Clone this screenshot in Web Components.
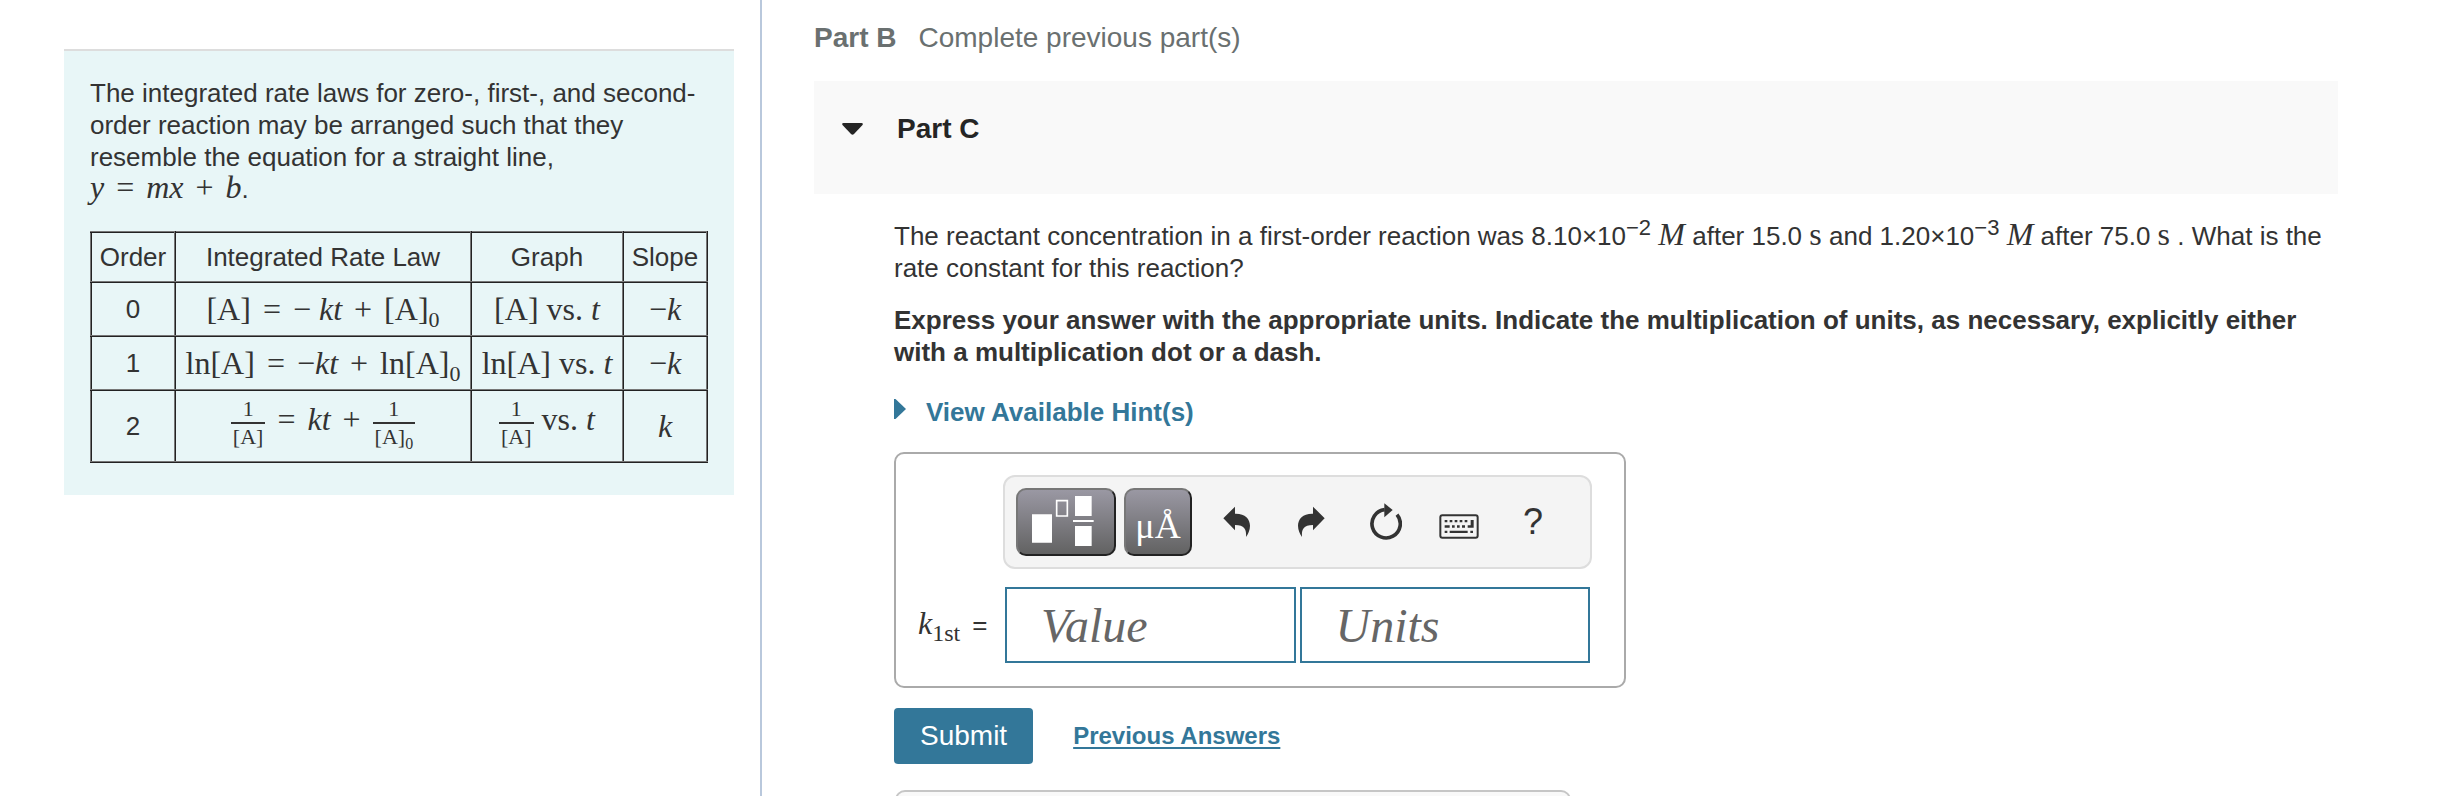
<!DOCTYPE html>
<html lang="en">
<head>
<meta charset="utf-8">
<meta name="viewport" content="width=device-width, initial-scale=1">
<title>Integrated rate laws</title>
<style>
    body {
        margin: 0;
        background: #fff;
        color: #333;
        font: 26px/32px "Liberation Sans", Arial, sans-serif;
    }
</style>
</head>
<body>

<study-layout>
    <intro-panel slot="intro">
        The integrated rate laws for zero-, first-, and second-order reaction may be arranged such that they resemble the equation for a straight line,<br>
        <math-text><i>y</i> <math-op>=</math-op> <i>mx</i> <math-op>+</math-op> <i>b</i></math-text>.
        <rate-table slot="table"></rate-table>
    </intro-panel>

    <locked-part label="Part B">Complete previous part(s)</locked-part>
    <part-header>Part C</part-header>
    <part-body>
        <span slot="question">The reactant concentration in a first-order reaction was 8.10×10<power-of>−2</power-of> <math-text><i>M</i></math-text> after 15.0 <math-text>s</math-text> and 1.20×10<power-of>−3</power-of> <math-text><i>M</i></math-text> after 75.0 <math-text>s</math-text> . What is the <span>rate constant for this reaction?</span></span>
        <span slot="instructions">Express your answer with the appropriate units. Indicate the multiplication of units, as necessary, explicitly either with a multiplication dot or a dash.</span>
        <hint-toggle>View Available Hint(s)</hint-toggle>
        <quantity-answer></quantity-answer>
        <answer-actions></answer-actions>
        <feedback-box></feedback-box>
    </part-body>
</study-layout>

<script>
class StudyLayout extends HTMLElement {

    constructor() {
        super();
        this.attachShadow({mode: "open"}).innerHTML = `
        <style>
            :host {
                display: grid;
                grid-template-columns: 44fr 97fr;
                height: 100vh;
                overflow: hidden;
            }

            aside {
                box-sizing: border-box;
                padding: 49px 26px 0 64px;
                border-right: 2px solid #b9c8dc;
            }

            main {
                min-width: 0;
                padding: 22px 100px 0 52px;
                overflow: hidden;
            }
        </style>
        <aside><slot name="intro"></slot></aside>
        <main><slot></slot></main>`;
    }
}

class IntroPanel extends HTMLElement {

    constructor() {
        super();
        this.attachShadow({mode: "open"}).innerHTML = `
        <style>
            :host {
                display: block;
                padding: 26px 26px 32px;
                border-top: 2px solid #ddd;
                background: #e8f6f7;
            }

            p {
                margin: 0 0 26px;
            }
        </style>
        <p><slot></slot></p>
        <slot name="table"></slot>`;
    }
}

/* serif run used for variables and formulas */
class MathText extends HTMLElement {

    constructor() {
        super();
        this.attachShadow({mode: "open"}).innerHTML = `<style>
            :host {
                font-family: "Liberation Serif", "Times New Roman", serif;
                font-size: 32px;
                line-height: 1px;
                white-space: nowrap;
            }
        </style><slot></slot>`;
    }
}

/* relation or binary operator, with a little air on both sides */
class MathOp extends HTMLElement {

    constructor() {
        super();
        this.attachShadow({mode: "open"}).innerHTML = `<style>
            :host {
                margin: 0 4px;
            }
        </style><slot></slot>`;
    }
}

class PowerOf extends HTMLElement {

    constructor() {
        super();
        this.attachShadow({mode: "open"}).innerHTML = `<style>
            sup {
                font-size: 22px;
                line-height: 1px;
            }
        </style><sup><slot></slot></sup>`;
    }
}

class RateTable extends HTMLElement {

    constructor() {
        super();
        this.attachShadow({mode: "open"}).innerHTML = `
        <style>
            :host {
                display: block;
            }

            table {
                width: 618px;
                max-width: 100%;
                border-collapse: collapse;
                table-layout: fixed;
            }

            .narrow { width: 84px; }
            .law { width: 296px; }

            th, td {
                height: 52px;
                padding: 0;
                border: 2px ridge #777;
                font-weight: normal;
                text-align: center;
            }

            th {
                height: 48px;
            }

            .tall td {
                height: 70px;
            }

            .tall .lifted {
                height: 64px;
                padding-bottom: 6px;
            }

            .math {
                font-family: "Liberation Serif", "Times New Roman", serif;
                font-size: 32px;
                white-space: nowrap;
            }

            sub {
                font-size: 22px;
                line-height: 1px;
            }

            .fraction {
                display: inline-flex;
                flex-direction: column;
                vertical-align: middle;
                font-size: 22px;
                line-height: 26px;
            }

            .fraction span:first-child {
                border-bottom: 2px solid #333;
            }

            .fraction span:last-child {
                padding: 0 2px;
            }

            .fraction sub {
                font-size: 16px;
            }
        </style>
        <table>
            <colgroup><col class="narrow"><col class="law"><col><col class="narrow"></colgroup>
            <thead>
                <tr><th>Order</th><th>Integrated Rate Law</th><th>Graph</th><th>Slope</th></tr>
            </thead>
            <tbody>
                <tr>
                    <td>0</td>
                    <td class="math">[A] <math-op>=</math-op> − <i>kt</i> <math-op>+</math-op> [A]<sub>0</sub></td>
                    <td class="math">[A] vs. <i>t</i></td>
                    <td class="math">−<i>k</i></td>
                </tr>
                <tr>
                    <td>1</td>
                    <td class="math">ln[A] <math-op>=</math-op> −<i>kt</i> <math-op>+</math-op> ln[A]<sub>0</sub></td>
                    <td class="math">ln[A] vs. <i>t</i></td>
                    <td class="math">−<i>k</i></td>
                </tr>
                <tr class="tall">
                    <td>2</td>
                    <td class="math lifted"><span class="fraction"><span>1</span><span>[A]</span></span> <math-op>=</math-op> <i>kt</i> <math-op>+</math-op> <span class="fraction"><span>1</span><span>[A]<sub>0</sub></span></span></td>
                    <td class="math lifted"><span class="fraction"><span>1</span><span>[A]</span></span> vs. <i>t</i></td>
                    <td class="math"><i>k</i></td>
                </tr>
            </tbody>
        </table>`;
    }
}

class LockedPart extends HTMLElement {

    connectedCallback() {
        this.attachShadow({mode: "open"}).innerHTML = `
        <style>
            :host {
                display: flex;
                gap: 22px;
                margin-bottom: 27px;
                color: #6a7070;
                font-size: 28px;
            }
        </style>
        <b>${this.getAttribute("label")}</b>
        <span><slot></slot></span>`;
    }
}

class PartHeader extends HTMLElement {

    constructor() {
        super();
        this.attachShadow({mode: "open"}).innerHTML = `
        <style>
            :host {
                display: block;
                padding: 32px 28px 49px;
                background: #f9f9f9;
                color: #252525;
            }

            h2 {
                margin: 0;
                font-size: 28px;
                line-height: 32px;
            }

            button {
                display: flex;
                align-items: center;
                gap: 34px;
                padding: 0;
                border: 0;
                background: none;
                color: inherit;
                font: inherit;
            }
        </style>
        <h2><button type="button" aria-expanded="true">
            <svg width="21" height="12" viewBox="0 0 21 12" fill="currentColor"><path d="M1.500 0h18q2 .3 1 2L12 11q-1.500 1.500-3 0L.5 2Q-.5.3 1.500 0z"/></svg>
            <slot></slot>
        </button></h2>`;
    }
}

class PartBody extends HTMLElement {

    constructor() {
        super();
        this.attachShadow({mode: "open"}).innerHTML = `
        <style>
            :host {
                display: block;
                padding: 26px 0 0 80px;
            }

            p {
                margin: 0 0 20px;
            }

            .instructions {
                margin-bottom: 28px;
                font-weight: bold;
            }
        </style>
        <p><slot name="question"></slot></p>
        <p class="instructions"><slot name="instructions"></slot></p>
        <slot></slot>`;
    }
}

class HintToggle extends HTMLElement {

    constructor() {
        super();
        this.attachShadow({mode: "open"}).innerHTML = `
        <style>
            :host {
                display: block;
                margin-bottom: 24px;
            }

            button {
                display: flex;
                gap: 20px;
                padding: 0;
                border: 0;
                background: none;
                color: #337799;
                font: inherit;
                font-weight: bold;
            }

            svg {
                margin-top: 3px;
            }
        </style>
        <button type="button" aria-expanded="false">
            <svg width="12" height="20" viewBox="0 0 12 20" fill="currentColor"><path d="M0 0h1.500L12 10 1.500 20H0z"/></svg>
            <slot></slot>
        </button>`;
    }
}

class MathToolbar extends HTMLElement {

    constructor() {
        super();
        this.attachShadow({mode: "open"}).innerHTML = `
        <style>
            :host {
                display: flex;
                gap: 8px;
                padding: 11px;
                border: 2px solid #ddd;
                border-radius: 12px;
                background: #f4f4f4;
            }

            button {
                display: flex;
                align-items: center;
                justify-content: center;
                box-sizing: border-box;
                height: 68px;
                padding: 0;
                border: 0;
                background: none;
                color: #333;
                font: inherit;
            }

            .dark {
                width: 68px;
                border: 2px solid;
                border-color: #777 #222 #222 #777;
                border-radius: 10px;
                background: linear-gradient(#9a98a3, #626262);
                color: #fff;
                font-family: "Liberation Serif", "Times New Roman", serif;
                font-size: 36px;
            }

            .symbols {
                padding-top: 8px;
            }

            .templates {
                width: 100px;
            }

            .tools {
                display: flex;
            }

            .tools button {
                width: 74px;
                font-size: 36px;
            }
        </style>
        <button class="dark templates" type="button" aria-label="Templates">
            <svg width="96" height="64" viewBox="6 6 288 192" fill="#fff">
                <path d="M48 79h60v85H48zM177 24h50v60h-50zM171 96h62v6h-62zM177 114h50v60h-50z"/>
                <path d="M122 38h32v46h-32z" fill="none" stroke="#fff" stroke-width="5"/>
            </svg>
        </button>
        <button class="dark symbols" type="button" aria-label="Symbols">μÅ</button>
        <div class="tools">
            <button type="button" aria-label="Undo">
                <svg width="28" height="36" viewBox="0 0 84 108" fill="currentColor"><path d="M1 43 36 8v21c30-1 45 16 45 36 0 14-6 25-12 34 1-18 0-36-33-36v16z"/></svg>
            </button>
            <button type="button" aria-label="Redo">
                <svg width="28" height="36" viewBox="0 0 84 108" fill="currentColor"><path d="M83 43 48 8v21C18 28 3 45 3 65c0 14 6 25 12 34-1-18 0-36 33-36v16z"/></svg>
            </button>
            <button type="button" aria-label="Reset">
                <svg width="34" height="38" viewBox="0 0 102 114" fill="none"><path d="M87 35A42.500 42.500 0 1 1 50 20" stroke="currentColor" stroke-width="11"/><path d="M49 1 74 21 49 43z" fill="currentColor"/></svg>
            </button>
            <button type="button" aria-label="Keyboard shortcuts">
                <svg width="40" height="40" viewBox="0 -4 120 120" fill="currentColor">
                    <rect x="4" y="36" width="112" height="67" rx="6" fill="none" stroke="currentColor" stroke-width="6"/>
                    <path d="M17 50h8v7h-8zM32 50h8v7h-8zM47 50h8v7h-8zM62 50h8v7h-8zM77 50h8v7h-8zM95 50h9v23H86v-7h9zM17 66h15v7H17zM39 66h8v7h-8zM54 66h8v7h-8zM69 66h9v7h-9zM17 82h8v7h-8zM32 82h54v7H32zM94 82h8v7h-8z"/>
                </svg>
            </button>
            <button type="button" aria-label="Help">?</button>
        </div>`;
    }
}

class QuantityAnswer extends HTMLElement {

    constructor() {
        super();
        this.attachShadow({mode: "open"}).innerHTML = `
        <style>
            :host {
                display: block;
                box-sizing: border-box;
                max-width: 732px;
                margin-bottom: 20px;
                padding: 21px 32px 23px 22px;
                border: 2px solid #aaa;
                border-radius: 10px;
            }

            .entry {
                display: flex;
                align-items: center;
                margin-top: 18px;
            }

            math-toolbar {
                margin-left: 85px;
            }

            label {
                display: flex;
                flex: none;
                align-items: baseline;
                gap: 12px;
                width: 85px;
                white-space: nowrap;
            }

            sub {
                font-size: 24px;
                line-height: 1px;
            }

            .fields {
                display: flex;
                flex: 1;
                gap: 4px;
                min-width: 0;
                margin: 0 2px;
            }

            input {
                flex: 1;
                box-sizing: border-box;
                min-width: 0;
                height: 76px;
                padding: 0 34px;
                border: 2px solid #337799;
                border-radius: 0;
                background: #fff;
                color: #333;
                font: italic 48px "Liberation Serif", "Times New Roman", serif;
            }

            input::placeholder {
                color: #666;
                opacity: 1;
            }
        </style>
        <math-toolbar></math-toolbar>
        <div class="entry">
            <label for="value"><math-text><i>k</i><sub>1st</sub></math-text> =</label>
            <div class="fields">
                <input id="value" type="text" placeholder="Value">
                <input type="text" placeholder="Units" aria-label="Units">
            </div>
        </div>`;
    }
}

class AnswerActions extends HTMLElement {

    constructor() {
        super();
        this.attachShadow({mode: "open"}).innerHTML = `
        <style>
            :host {
                display: flex;
                align-items: center;
                gap: 40px;
                margin-bottom: 26px;
            }

            button {
                height: 56px;
                padding: 0 26px;
                border: 0;
                border-radius: 4px;
                background: #337799;
                color: #fff;
                font: inherit;
                font-size: 28px;
            }

            a {
                color: #337799;
                font-size: 24px;
                font-weight: bold;
                text-decoration-thickness: 2px;
                text-underline-offset: 3px;
                text-decoration-skip-ink: none;
            }
        </style>
        <button type="submit">Submit</button>
        <a href="#previous">Previous Answers</a>`;
    }
}

class FeedbackBox extends HTMLElement {

    constructor() {
        super();
        this.attachShadow({mode: "open"}).innerHTML = `
        <style>
            :host {
                display: block;
                box-sizing: border-box;
                max-width: 676px;
                height: 80px;
                margin-left: 1px;
                border: 2px solid #c6c6c6;
                border-radius: 10px;
                background: #f9f9f9;
            }
        </style>`;
    }
}

customElements.define("study-layout", StudyLayout);
customElements.define("intro-panel", IntroPanel);
customElements.define("math-text", MathText);
customElements.define("math-op", MathOp);
customElements.define("power-of", PowerOf);
customElements.define("rate-table", RateTable);
customElements.define("locked-part", LockedPart);
customElements.define("part-header", PartHeader);
customElements.define("part-body", PartBody);
customElements.define("hint-toggle", HintToggle);
customElements.define("math-toolbar", MathToolbar);
customElements.define("quantity-answer", QuantityAnswer);
customElements.define("answer-actions", AnswerActions);
customElements.define("feedback-box", FeedbackBox);
</script>
</body>
</html>
